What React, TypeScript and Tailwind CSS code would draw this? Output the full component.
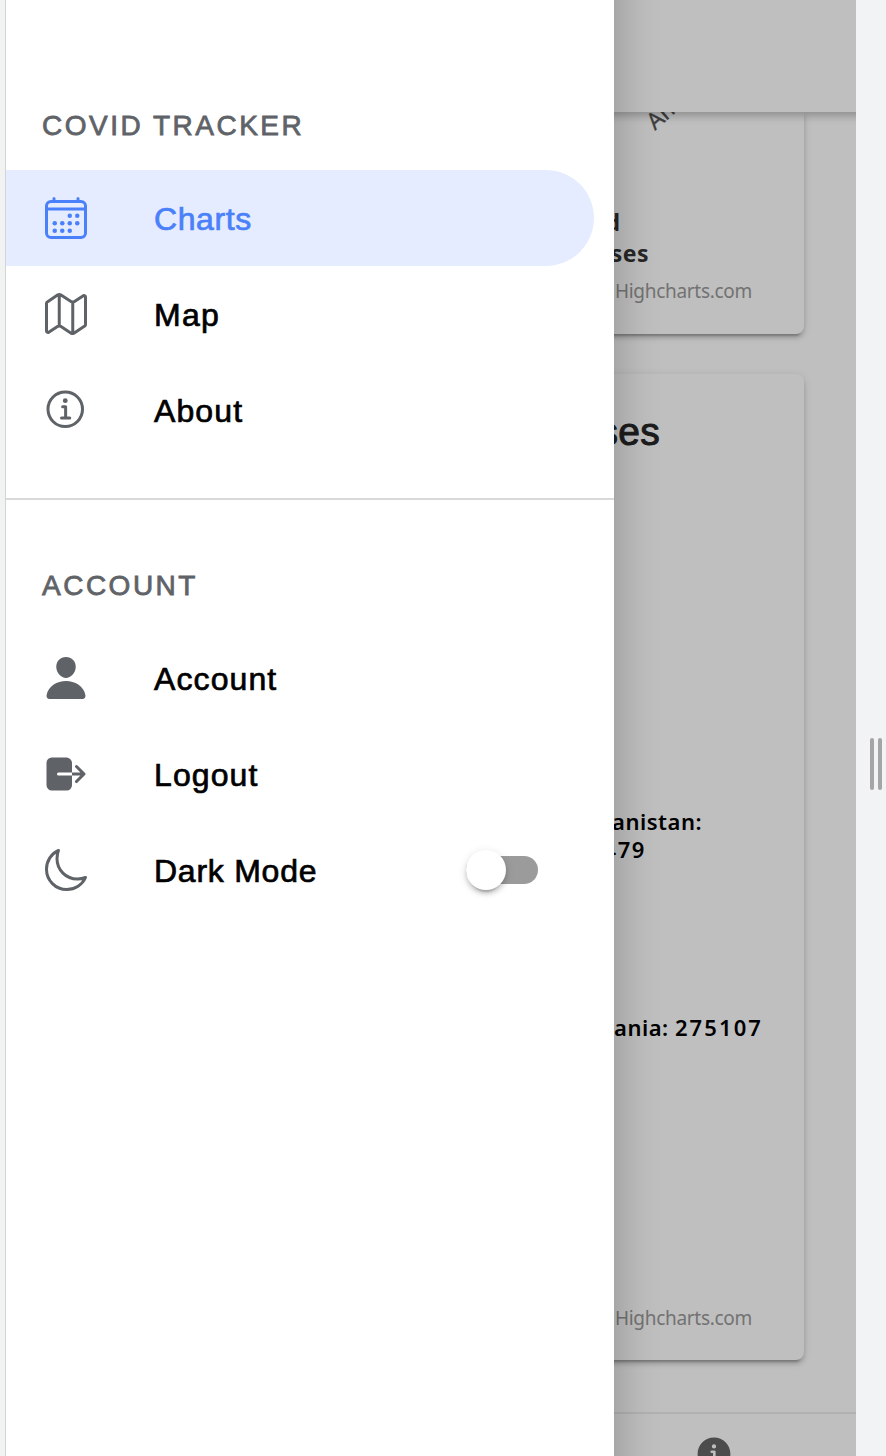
import React from "react";
import type { ReactNode } from "react";
import {
  IoCalendarOutline,
  IoMapOutline,
  IoInformationCircleOutline,
  IoInformationCircle,
  IoPerson,
  IoLogOut,
  IoMoonOutline,
} from "react-icons/io5";

function SectionHeader({ children, className }: { children: ReactNode; className: string }) {
  return (
    <h2
      className={`pl-9 text-[28px] leading-8 tracking-[2.5px] text-[#5f6368] [-webkit-text-stroke:0.8px_#5f6368] ${className}`}
    >
      {children}
    </h2>
  );
}

type RowProps = {
  icon: ReactNode;
  label: string;
  spacing?: string;
  active?: boolean;
  children?: ReactNode;
};

function MenuRow({ icon, label, spacing = "tracking-[1.1px]", active = false, children }: RowProps) {
  const tone = active
    ? "bg-[#e6ecff] text-[#4a80fa] [-webkit-text-stroke:0.7px_#4a80fa]"
    : "text-black [-webkit-text-stroke:0.7px_black]";
  return (
    <li className={`mr-5 flex h-24 items-center rounded-r-full pl-9 ${tone}`}>
      <span
        className={`mr-16 flex size-12 shrink-0 ${active ? "text-[#4a80fa]" : "text-[#5f6368]"}`}
      >
        {icon}
      </span>
      <span className={`flex-1 pt-0.5 text-[32px] leading-10 ${spacing}`}>{label}</span>
      {children}
    </li>
  );
}

function Toggle() {
  return (
    <span className="mr-14 flex h-7 w-[72px] items-center rounded-full bg-[#9b9b9b]">
      <span className="size-10 shrink-0 rounded-full bg-white shadow-[0_6px_2px_-4px_rgba(0,0,0,0.2),0_4px_4px_0_rgba(0,0,0,0.14),0_2px_10px_0_rgba(0,0,0,0.12)]" />
    </span>
  );
}

const cardShadow =
  "shadow-[0_6px_2px_-4px_rgba(0,0,0,0.2),0_4px_4px_0_rgba(0,0,0,0.14),0_2px_10px_0_rgba(0,0,0,0.12)]";

function Credits() {
  return (
    <p className="pr-[52px] text-[19px] leading-6 tracking-[-0.3px] text-[#999]">Highcharts.com</p>
  );
}

export default function App() {
  return (
    <div className="flex h-[1456px] w-[886px] overflow-hidden bg-[#f1f3f5] font-['Liberation_Sans',Arial,sans-serif]">
      <div className="z-20 w-1.5 shrink-0 border-r border-[#d3d4d5] bg-[#f1f2f2]" />

      <nav className="z-10 w-[608px] shrink-0 bg-white shadow-[-32px_0_36px_40px_rgba(0,0,0,0.19)]">
        <SectionHeader className="mt-[110px]">COVID TRACKER</SectionHeader>
        <ul className="mt-7">
          <MenuRow icon={<IoCalendarOutline size={48} />} label="Charts" active spacing="tracking-[0.6px]" />
          <MenuRow icon={<IoMapOutline size={48} />} label="Map" spacing="tracking-[1.3px]" />
          <MenuRow icon={<IoInformationCircleOutline size={48} />} label="About" />
        </ul>
        <div className="mt-10 h-0.5 bg-[#d9d9d9]" />
        <SectionHeader className="mt-[70px]">ACCOUNT</SectionHeader>
        <ul className="mt-7">
          <MenuRow icon={<IoPerson size={48} />} label="Account" />
          <MenuRow icon={<IoLogOut size={48} />} label="Logout" />
          <MenuRow icon={<IoMoonOutline size={48} />} label="Dark Mode" spacing="tracking-[0.75px]">
            <Toggle />
          </MenuRow>
        </ul>
      </nav>

      <main className="relative flex w-[242px] shrink-0 flex-col overflow-hidden bg-white">
        <header className="z-[1] -mx-3 h-28 shrink-0 bg-white shadow-[0_4px_8px_rgba(0,0,0,0.25)]" />

        <section
          className={`-ml-4 mr-[52px] flex h-[222px] shrink-0 flex-col whitespace-nowrap rounded-b-lg bg-white font-['Noto_Sans',sans-serif] ${cardShadow}`}
        >
          <div className="h-[94px] shrink-0 pl-[59px]">
            <span className="mt-[-3px] inline-block origin-bottom-left -rotate-[41deg] text-[23px] leading-6 text-[#555] [-webkit-text-stroke:0.3px_#555]">
              America
            </span>
          </div>
          <div className="text-[23px] leading-[32px] font-bold text-[#333]">
            <p className="w-[22px] text-right">d</p>
            <p className="-mt-px flex w-[51px] justify-end tracking-[0.5px]">cases</p>
          </div>
          <div className="mt-2.5 self-end">
            <Credits />
          </div>
        </section>

        <section
          className={`-ml-4 mr-[52px] mt-10 flex h-[986px] shrink-0 flex-col whitespace-nowrap rounded-lg bg-white ${cardShadow}`}
        >
          <h3 className="mt-[35px] flex w-[62px] justify-end text-[39px] leading-[46px] tracking-[0.3px] text-[#262626] [-webkit-text-stroke:1px_#262626]">
            Cases
          </h3>
          <div className="mt-[352px] font-['Noto_Sans',sans-serif] text-[22px] leading-7 font-semibold text-black">
            <p className="flex w-[104px] justify-end tracking-[0.5px]">Afghanistan:</p>
            <p className="flex w-[48px] justify-end tracking-[1.6px]">56479</p>
            <p className="mt-[150px] flex w-[165px] justify-end tracking-[0.5px]">
              <span>Albania:&nbsp;</span>
              <span className="tracking-[2.1px]">275107</span>
            </p>
          </div>
          <div className="mt-auto self-end pb-[30px] font-['Noto_Sans',sans-serif]">
            <Credits />
          </div>
        </section>

        <footer className="mt-[52px] flex h-[100px] shrink-0 justify-end border-t-2 border-[#ededed] bg-white pt-[19px] pr-[121px]">
          <IoInformationCircle size={42} className="shrink-0 text-[#666]" />
        </footer>

        <div className="absolute inset-0 z-[2] bg-black/25" />
      </main>

      <div className="flex w-[30px] shrink-0 items-center justify-end gap-1 pt-[72px] pr-1">
        <span className="h-[52px] w-1 rounded-full bg-[#a5a5a5]" />
        <span className="h-[52px] w-1 rounded-full bg-[#a5a5a5]" />
      </div>
    </div>
  );
}
